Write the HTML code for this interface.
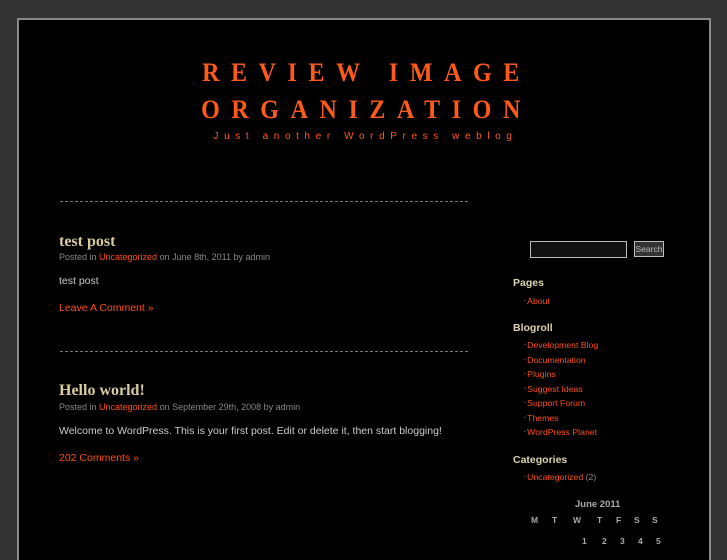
<!DOCTYPE html>
<html><head><style>
body{margin:0;background:#333;width:727px;height:545px;overflow:hidden;font-family:"Liberation Sans",sans-serif;}
#wrap{position:absolute;left:17px;top:18px;width:690px;height:540px;background:#000;border:2px solid #888;border-bottom:none;}
.a{position:absolute;white-space:nowrap;}
.t{font-family:"Liberation Serif",serif;font-weight:bold;color:#ff5a1a;font-size:24px;letter-spacing:11.6px;left:0;width:727px;text-align:center;padding-left:6px;box-sizing:border-box;transform:scaleY(1.12);}
.dash{position:absolute;left:60px;width:408px;border-top:1px dashed #777;}
.pt{font-family:"Liberation Serif",serif;font-weight:bold;color:#d9cba0;font-size:16px;}
.meta{font-size:9px;color:#888;}
.o{color:#ff4f0f;}
.body{font-size:10.5px;color:#ccc;}
.lnk{font-size:10.5px;color:#ff4f0f;}
.h{font-size:10.5px;font-weight:bold;color:#ddd2b0;}
.li{font-size:8.7px;color:#ff4f0f;}
.li:before{content:"▪ ";color:#555;font-size:5px;vertical-align:2px;}
.cal{font-size:8.5px;font-weight:bold;color:#aaa;}
</style></head><body>
<div id="wrap"></div>
<div class="a t" style="top:60px">REVIEW IMAGE</div>
<div class="a t" style="top:97px">ORGANIZATION</div>
<div class="a" style="top:131px;left:0;width:727px;text-align:center;font-size:10px;color:#ff5a1a;letter-spacing:5.6px;padding-left:2px">Just another WordPress weblog</div>
<div class="dash" style="top:201px"></div>
<div class="a pt" style="left:59px;top:233px">test post</div>
<div class="a meta" style="left:59px;top:252px">Posted in <span class="o">Uncategorized</span> on June 8th, 2011 by admin</div>
<div class="a body" style="left:59px;top:275px">test post</div>
<div class="a lnk" style="left:59px;top:302px">Leave A Comment »</div>
<div class="dash" style="top:351px"></div>
<div class="a pt" style="left:59px;top:382px">Hello world!</div>
<div class="a meta" style="left:59px;top:402px">Posted in <span class="o">Uncategorized</span> on September 29th, 2008 by admin</div>
<div class="a body" style="left:59px;top:425px">Welcome to WordPress. This is your first post. Edit or delete it, then start blogging!</div>
<div class="a lnk" style="left:59px;top:452px">202 Comments »</div>
<div class="a" style="left:530px;top:241px;width:95px;height:15px;border:1px solid #bbb;background:#111"></div>
<div class="a" style="left:634px;top:241px;width:28px;height:14px;border:1px solid #bbb;background:#333;color:#bbb;font-size:8.5px;line-height:14px;text-align:center;overflow:hidden">Search</div>
<div class="a h" style="left:513px;top:277px">Pages</div>
<div class="a li" style="left:524px;top:296px">About</div>
<div class="a h" style="left:513px;top:322px">Blogroll</div>
<div class="a li" style="left:524px;top:340px">Development Blog</div>
<div class="a li" style="left:524px;top:355px">Documentation</div>
<div class="a li" style="left:524px;top:369px">Plugins</div>
<div class="a li" style="left:524px;top:384px">Suggest Ideas</div>
<div class="a li" style="left:524px;top:398px">Support Forum</div>
<div class="a li" style="left:524px;top:413px">Themes</div>
<div class="a li" style="left:524px;top:427px">WordPress Planet</div>
<div class="a h" style="left:513px;top:454px">Categories</div>
<div class="a li" style="left:524px;top:472px">Uncategorized <span style="color:#888">(2)</span></div>
<div class="a cal" style="left:575px;top:499px;font-size:9.5px">June 2011</div>
<div class="a cal" style="left:531px;top:515px">M</div>
<div class="a cal" style="left:552px;top:515px">T</div>
<div class="a cal" style="left:573px;top:515px">W</div>
<div class="a cal" style="left:597px;top:515px">T</div>
<div class="a cal" style="left:616px;top:515px">F</div>
<div class="a cal" style="left:634px;top:515px">S</div>
<div class="a cal" style="left:652px;top:515px">S</div>
<div class="a cal" style="left:582px;top:536px">1</div>
<div class="a cal" style="left:602px;top:536px">2</div>
<div class="a cal" style="left:620px;top:536px">3</div>
<div class="a cal" style="left:638px;top:536px">4</div>
<div class="a cal" style="left:656px;top:536px">5</div>
</body></html>
